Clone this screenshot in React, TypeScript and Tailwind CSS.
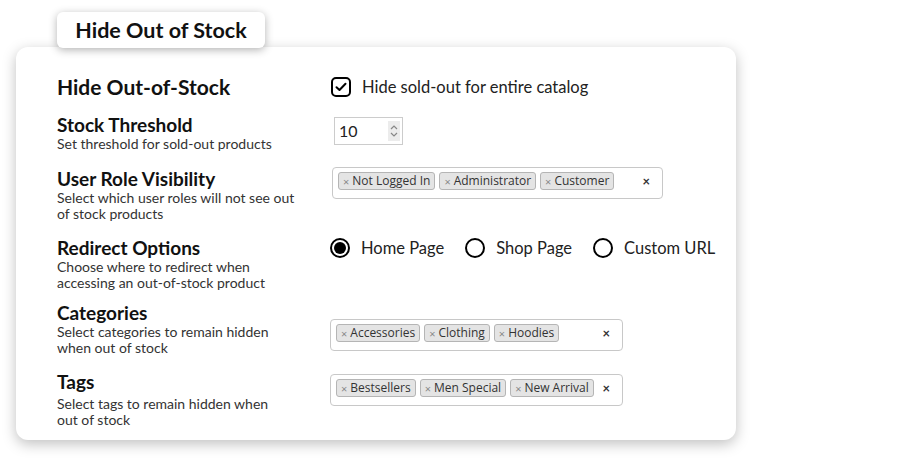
import React from "react";

const font = { fontFamily: "Lato, 'Noto Sans', sans-serif" };

const Chip = ({ label }: { label: string }) => (
  <span className="flex items-center h-[18px] px-[4px] rounded-[3px] border border-[#b5b5b5] bg-[#e4e4e4] text-[12px] text-[#333] leading-none font-['Open_Sans',sans-serif]">
    <span className="text-[#888] text-[11px] mr-[3px]">×</span>
    {label}
  </span>
);

const MultiSelect = ({
  items,
  width,
}: {
  items: string[];
  width: string;
}) => (
  <div
    className={`${width} h-[32px] border border-[#c8c8c8] rounded-[4px] bg-white flex items-start pt-[4px] pl-[5px] pr-[12px]`}
  >
    <div className="flex gap-[4px] flex-1">
      {items.map((i) => (
        <Chip key={i} label={i} />
      ))}
    </div>
    <span className="text-[13px] font-bold text-[#333] leading-[18px]">×</span>
  </div>
);

const Radio = ({ label, checked }: { label: string; checked?: boolean }) => (
  <label className="flex items-center gap-[11px]">
    <span className="w-[20px] h-[20px] rounded-full border-2 border-black flex items-center justify-center">
      {checked && <span className="w-[12px] h-[12px] rounded-full bg-black" />}
    </span>
    <span className="text-[16.5px] text-[#222]">{label}</span>
  </label>
);

const Label = ({
  title,
  desc,
  big,
}: {
  title: string;
  desc?: string[];
  big?: boolean;
}) => (
  <div className="w-[273px] shrink-0">
    <div
      className={`${big ? "text-[21px] leading-[24px]" : "text-[19px] leading-[22px]"} font-bold text-[#111]`}
    >
      {title}
    </div>
    {desc && (
      <div className="text-[14px] leading-[16px] text-[#333]">
        {desc.map((d) => (
          <div key={d}>{d}</div>
        ))}
      </div>
    )}
  </div>
);

export default function App() {
  return (
    <div className="w-[899px] h-[461px] bg-white relative" style={font}>
      <div className="pt-[47px] pl-[16px]">
        <div className="w-[720px] h-[393px] bg-white rounded-[12px] shadow-[0_4px_14px_rgba(0,0,0,0.25)] pl-[41px] pt-[28px]">
          {/* Hide out of stock */}
          <div className="flex items-center h-[24px] mb-[15px]">
            <Label title="Hide Out-of-Stock" big />
            <div className="flex items-center gap-[11px] ml-[1px]">
              <span className="w-[20px] h-[20px] rounded-[5px] border-2 border-black flex items-center justify-center">
                <svg width="12" height="10" viewBox="0 0 12 10" fill="none">
                  <path
                    d="M1.5 5.2 L4.5 8 L10.5 1.8"
                    stroke="black"
                    strokeWidth="2"
                    strokeLinecap="round"
                    strokeLinejoin="round"
                  />
                </svg>
              </span>
              <span className="text-[16.5px] text-[#222]">
                Hide sold-out for entire catalog
              </span>
            </div>
          </div>

          {/* Stock threshold */}
          <div className="flex items-start h-[54px]">
            <Label
              title="Stock Threshold"
              desc={["Set threshold for sold-out products"]}
            />
            <div className="ml-[4px] mt-[3px] w-[69px] h-[28px] border border-[#ccc] flex items-center pl-[4px] pr-[2px]">
              <span className="text-[16px] text-[#222] flex-1">10</span>
              <span className="w-[12px] h-[20px] bg-[#ececec] flex flex-col items-center justify-center">
                <svg width="8" height="14" viewBox="0 0 8 14" fill="none">
                  <path d="M1 5 L4 2 L7 5" stroke="#888" strokeWidth="1.2" />
                  <path d="M1 9 L4 12 L7 9" stroke="#888" strokeWidth="1.2" />
                </svg>
              </span>
            </div>
          </div>

          {/* User role */}
          <div className="flex items-start h-[69px]">
            <Label
              title="User Role Visibility"
              desc={[
                "Select which user roles will not see out",
                "of stock products",
              ]}
            />
            <div className="ml-[2px] -mt-[1px]">
              <MultiSelect
                width="w-[331px]"
                items={["Not Logged In", "Administrator", "Customer"]}
              />
            </div>
          </div>

          {/* Redirect */}
          <div className="flex items-start h-[65px]">
            <Label
              title="Redirect Options"
              desc={[
                "Choose where to redirect when",
                "accessing an out-of-stock product",
              ]}
            />
            <div className="flex items-center gap-[21px] h-[22px]">
              <Radio label="Home Page" checked />
              <Radio label="Shop Page" />
              <Radio label="Custom URL" />
            </div>
          </div>

          {/* Categories */}
          <div className="flex items-start h-[69px]">
            <Label
              title="Categories"
              desc={["Select categories to remain hidden", "when out of stock"]}
            />
            <div className="mt-[17px]">
              <MultiSelect
                width="w-[293px]"
                items={["Accessories", "Clothing", "Hoodies"]}
              />
            </div>
          </div>

          {/* Tags */}
          <div className="flex items-start">
            <div className="w-[273px] shrink-0">
              <div className="text-[19px] leading-[22px] font-bold text-[#111]">
                Tags
              </div>
              <div className="text-[14px] leading-[16px] text-[#333] mt-[3px]">
                <div>Select tags to remain hidden when</div>
                <div>out of stock</div>
              </div>
            </div>
            <div className="mt-[3px]">
              <MultiSelect
                width="w-[293px]"
                items={["Bestsellers", "Men Special", "New Arrival"]}
              />
            </div>
          </div>
        </div>
      </div>

      {/* tab */}
      <div className="absolute left-[57px] top-[12px] w-[208px] h-[36px] bg-white rounded-[6px] shadow-[0_2px_8px_rgba(0,0,0,0.3)] flex items-center justify-center text-[21.5px] font-bold text-[#111]">
        Hide Out of Stock
      </div>
    </div>
  );
}
